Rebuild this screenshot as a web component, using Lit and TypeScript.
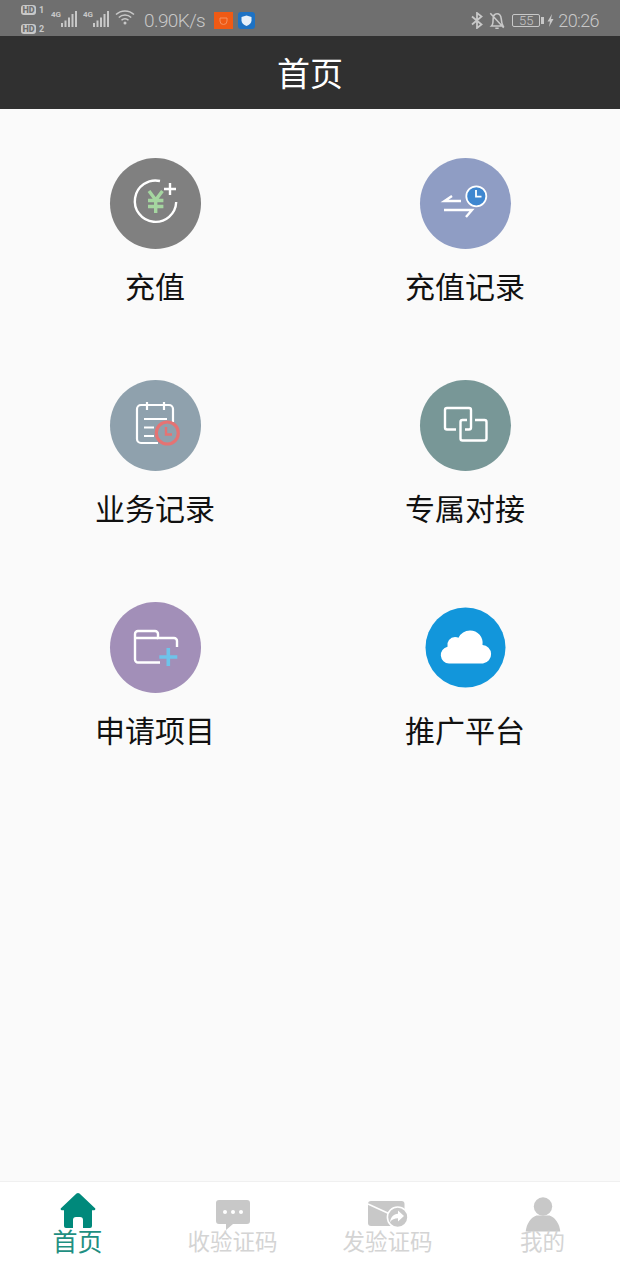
import { LitElement, html, css, svg } from 'lit';
import { customElement } from 'lit/decorators.js';

const icons = {
  recharge: svg`
    <path d="M50 23 A20.7 20.7 0 1 0 66.200 44" fill="none" stroke="#fff" stroke-width="2.400"/>
    <path d="M60 25v12M54 31h12" stroke="#fff" stroke-width="2.400"/>
    <path d="M39 33l6.700 9 6.700-9M38 42.500h15.400M38 48.500h15.400M45.700 42v13" fill="none" stroke="#a5d6a0" stroke-width="3.400"/>`,
  history: svg`
    <path d="M41 43H24.500l7.500-5" fill="none" stroke="#fff" stroke-width="2.400"/>
    <path d="M24 52h28l-6 7" fill="none" stroke="#fff" stroke-width="2.400"/>
    <circle cx="56.300" cy="38.300" r="10" fill="#3f87d0" stroke="#fff" stroke-width="1.800"/>
    <path d="M56 32v6.600h5.500" fill="none" stroke="#fff" stroke-width="1.800"/>`,
  business: svg`
    <path d="M48 63H31a4 4 0 0 1-4-4V29a4 4 0 0 1 4-4h28a4 4 0 0 1 4 4v13" fill="none" stroke="#fff" stroke-width="2.200"/>
    <path d="M37 22v8M54 22v8M34 39h23M34 47.500h10M34 56h10" fill="none" stroke="#fff" stroke-width="2.200"/>
    <circle cx="57.300" cy="53" r="11" fill="#8fa1ad" stroke="#e57373" stroke-width="3.200"/>
    <path d="M56 47v7.500h6" fill="none" stroke="#e57373" stroke-width="2.400"/>`,
  link: svg`
    <path d="M36 49.500H27a2 2 0 0 1-2-2V30a2 2 0 0 1 2-2h22a2 2 0 0 1 2 2v17.500a2 2 0 0 1-2 2h-4" fill="none" stroke="#fff" stroke-width="2.400"/>
    <path d="M47 40h-4.500a2 2 0 0 0-2 2v16.500a2 2 0 0 0 2 2H64.500a2 2 0 0 0 2-2V42a2 2 0 0 0-2-2H55" fill="none" stroke="#fff" stroke-width="2.400"/>`,
  apply: svg`
    <path d="M50 60.500H28a3 3 0 0 1-3-3V32a3 3 0 0 1 3-3h17a3 3 0 0 1 3 3v4H64a3 3 0 0 1 3 3v6" fill="none" stroke="#fff" stroke-width="2.400"/>
    <path d="M25 36h23" stroke="#fff" stroke-width="2.400"/>
    <path d="M58.300 46v18M49.300 55h18" stroke="#6ec3ea" stroke-width="3.600"/>`,
  cloud: svg`
    <circle cx="45.500" cy="45.500" r="40" fill="#1296db"/>
    <path d="M29 61.500a8.500 8.500 0 0 1-1.500-16.800 8 8 0 0 1 7.500-9.700c1.500 0 2.600.3 3.500.8A13 13 0 0 1 50 28.500a12.500 12.500 0 0 1 12.500 14.500 9.300 9.300 0 0 1 .5 18.500z" fill="#fff"/>`,
};

const tabIcons = {
  home: svg`<path fill="currentColor" d="M18.500 .6a2.200 2.200 0 0 1 3 0L36.800 15a1.200 1.200 0 0 1-.8 2.200h-2V33a2 2 0 0 1-2 2H25V27a3 3 0 0 0-3-3h-4a3 3 0 0 0-3 3v8H8a2 2 0 0 1-2-2V17.200H4A1.200 1.200 0 0 1 3.200 15z"/>`,
  sms: svg`
    <path fill="currentColor" d="M6 7h28a3 3 0 0 1 3 3v18a3 3 0 0 1-3 3H20l-7 6v-6H6a3 3 0 0 1-3-3V10a3 3 0 0 1 3-3z"/>
    <circle cx="12" cy="19" r="2" fill="#fff"/><circle cx="20" cy="19" r="2" fill="#fff"/><circle cx="28" cy="19" r="2" fill="#fff"/>`,
  send: svg`
    <rect fill="currentColor" x="0" y="8" width="36.500" height="25" rx="3"/>
    <path d="M0 11l24 11" fill="none" stroke="#fff" stroke-width="1.600"/>
    <circle cx="29.700" cy="24.300" r="10.300" fill="currentColor" stroke="#fff" stroke-width="1.600"/>
    <path fill="#fff" d="M30 17.500l6 5.500-6 5.500v-3.300c-3.500 0-6 1-8 4 .5-5 3.500-8 8-8.500z"/>`,
  mine: svg`
    <circle cx="20" cy="13.500" r="9.200" fill="currentColor"/>
    <path fill="currentColor" d="M13.500 22.500h13c6 2 10 8.500 10.800 16H2.700c.8-7.500 4.800-14 10.800-16z"/>`,
};

const tiles = [
  { label: '充值', icon: icons.recharge, color: '#808080' },
  { label: '充值记录', icon: icons.history, color: '#8f9dc4' },
  { label: '业务记录', icon: icons.business, color: '#8fa1ad' },
  { label: '专属对接', icon: icons.link, color: '#789797' },
  { label: '申请项目', icon: icons.apply, color: '#a28fb8' },
  { label: '推广平台', icon: icons.cloud, color: 'transparent' },
];

const tabs = [
  { label: '首页', icon: tabIcons.home, active: true },
  { label: '收验证码', icon: tabIcons.sms, active: false },
  { label: '发验证码', icon: tabIcons.send, active: false },
  { label: '我的', icon: tabIcons.mine, active: false },
];

const signal = () => html`
  <svg class="signal" width="27" height="18" viewBox="0 0 27 18">
    <text x="0" y="7" font-size="8" font-weight="700" fill="#c8c8c8" font-family="Roboto, sans-serif">4G</text>
    <path d="M10 13h2v4h-2zM13.500 10.500h2V17h-2zM17 7.500h2V17h-2zM20.500 4h2v13h-2zM24 1h2v16h-2z" fill="#c8c8c8"/>
  </svg>
`;

@customElement('app-root')
export class AppRoot extends LitElement {
  static styles = css`
    :host {
      display: flex;
      flex-direction: column;
      height: 1274px;
      background: #fafafa;
      font-family: "Noto Sans CJK SC", sans-serif;
      overflow: hidden;
    }
    .status {
      height: 36px;
      flex: none;
      box-sizing: border-box;
      background: #6f6f6f;
      color: #c8c8c8;
      font-family: Roboto, sans-serif;
      font-weight: 300;
      display: flex;
      align-items: center;
      padding: 4px 21px 0 21px;
    }
    .hd {
      display: flex;
      flex-direction: column;
      gap: 9px;
      margin-top: -1px;
      width: 30px;
    }
    .hd span {
      display: flex;
      align-items: center;
      gap: 3px;
      font-size: 9px;
      line-height: 10px;
      font-weight: 700;
    }
    .hd b {
      width: 15px;
      height: 10px;
      border-radius: 3px;
      background: #c8c8c8;
      color: #6f6f6f;
      font-size: 9px;
      text-align: center;
    }
    .signal {
      margin: -3px 5px 0 0;
    }
    .wifi {
      margin-top: -6px;
    }
    .speed {
      font-size: 19px;
      letter-spacing: -0.6px;
      margin-left: 9px;
      width: 70px;
      white-space: nowrap;
    }
    .app-icons {
      display: flex;
      gap: 5px;
    }
    .spacer {
      flex: 1;
    }
    .time {
      font-size: 18px;
      letter-spacing: -0.6px;
      margin-left: 4px;
    }
    .battery {
      margin-left: 6px;
      box-sizing: border-box;
      width: 28px;
      height: 13px;
      border: 1px solid #c8c8c8;
      border-radius: 2px;
      font-size: 13px;
      line-height: 11px;
      text-align: center;
    }
    .tip {
      width: 3px;
      height: 7px;
      background: #c8c8c8;
      margin-left: 1px;
    }
    .bolt {
      margin-left: 3px;
    }
    .bell {
      margin-left: 5px;
    }
    .header {
      height: 73px;
      flex: none;
      box-sizing: border-box;
      padding-bottom: 2px;
      background: #303030;
      color: #fff;
      font-size: 33px;
      display: flex;
      align-items: center;
      justify-content: center;
    }
    .grid {
      flex: 1;
      display: grid;
      grid-template-columns: 1fr 1fr;
      grid-auto-rows: 222px;
      padding-top: 49px;
    }
    .tile {
      display: flex;
      flex-direction: column;
      align-items: center;
    }
    .circle {
      width: 91px;
      height: 91px;
      border-radius: 50%;
    }
    .tile-label {
      margin-top: 15px;
      font-size: 30px;
      line-height: 42px;
      color: #111;
    }
    .tabbar {
      height: 93px;
      flex: none;
      box-sizing: border-box;
      background: #fff;
      border-top: 1px solid #f0f0f0;
      display: grid;
      grid-template-columns: repeat(4, 1fr);
    }
    .tab {
      display: flex;
      flex-direction: column;
      align-items: center;
      padding-top: 11px;
      color: #c8c8c8;
    }
    .tab.active {
      color: #00897b;
    }
    .tab-icon {
      overflow: visible;
    }
    .tab-label {
      margin-top: -8px;
      font-size: 22.500px;
      line-height: 30px;
      color: #d4d4d4;
    }
    .tab.active .tab-label {
      font-size: 25px;
      color: #1f8f82;
    }
  `;

  render() {
    return html`
      <div class="status">
        <div class="hd">
          <span><b>HD</b>1</span>
          <span><b>HD</b>2</span>
        </div>
        ${signal()}${signal()}
        <svg class="wifi" width="20" height="16" viewBox="0 0 20 16" fill="none" stroke="#c8c8c8" stroke-width="1.500">
          <path d="M1 5.500a13 13 0 0 1 18 0M3.800 8.500a9 9 0 0 1 12.400 0M6.500 11.300a5 5 0 0 1 7 0"/>
          <circle cx="10" cy="14" r="1.500" fill="#c8c8c8" stroke="none"/>
        </svg>
        <span class="speed">0.90K/s</span>
        <div class="app-icons">
          <svg width="19" height="17" viewBox="0 0 19 17"><rect width="19" height="17" fill="#f05a14"/><path d="M6 6h7M6 6v3a3.500 3.500 0 0 0 7 0V6" fill="none" stroke="#f59160" stroke-width="1"/></svg>
          <svg width="17" height="17" viewBox="0 0 17 17"><rect width="17" height="17" rx="3" fill="#1d72c4"/><path d="M8.500 3.500l5 1.500v3.500c0 2.500-2 4.500-5 5.500-3-1-5-3-5-5.500V5z" fill="#e6f0fa"/></svg>
        </div>
        <div class="spacer"></div>
        <svg width="12" height="17" viewBox="0 0 12 17" fill="none" stroke="#c8c8c8" stroke-width="1.800">
          <path d="M1 4.500l9.500 8L6 16V1l4.500 3.500L1 12.500"/>
        </svg>
        <svg class="bell" width="18" height="19" viewBox="0 0 16 17" fill="none" stroke="#c8c8c8" stroke-width="1.400">
          <path d="M3 13.500c1.500-1.500 1.500-3 1.500-6 0-3 1.500-5 3.500-5s3.500 1.500 3.800 4.500c.2 3 .7 5 1.700 6.500zM6.500 15.500h3M2 2l12 13"/>
        </svg>
        <div class="battery">55</div>
        <div class="tip"></div>
        <svg class="bolt" width="7" height="13" viewBox="0 0 6 13"><path d="M4.500 0L0 7.500h2.500L1.500 13 6 5H3.500z" fill="#c8c8c8"/></svg>
        <span class="time">20:26</span>
      </div>
      <div class="header">首页</div>
      <div class="grid">
        ${tiles.map(
          (t) => html`
            <div class="tile">
              <svg class="circle" style="background:${t.color}" viewBox="0 0 91 91">${t.icon}</svg>
              <div class="tile-label">${t.label}</div>
            </div>
          `
        )}
      </div>
      <div class="tabbar">
        ${tabs.map(
          (t) => html`
            <div class="tab ${t.active ? 'active' : ''}">
              <svg class="tab-icon" width="40" height="40" viewBox="0 0 40 40">${t.icon}</svg>
              <div class="tab-label">${t.label}</div>
            </div>
          `
        )}
      </div>
    `;
  }
}
